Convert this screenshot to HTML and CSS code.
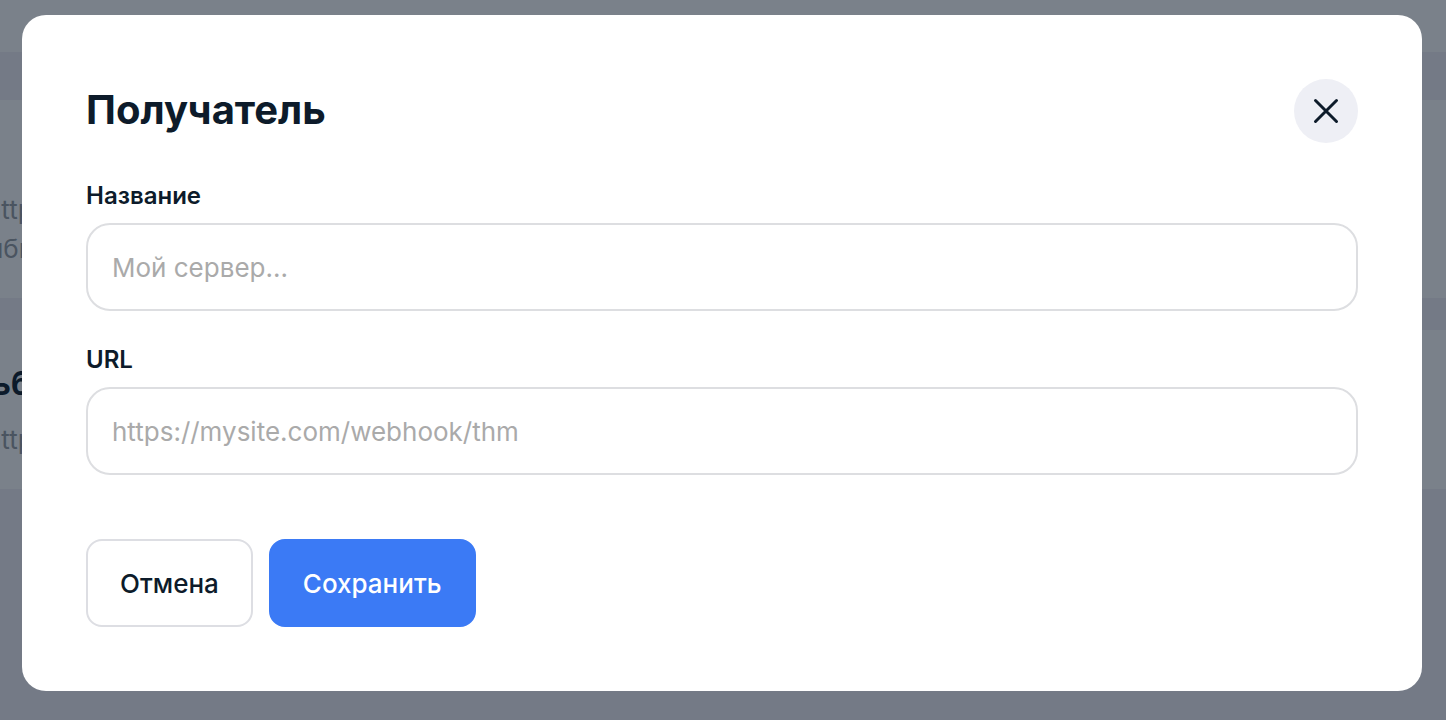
FILE: index.html
```html
<!DOCTYPE html>
<html lang="ru">
<head>
  <meta charset="UTF-8">
  <meta name="viewport" content="width=device-width, initial-scale=1.0">
  <title>Получатель</title>
  <link rel="stylesheet" href="styles.css">
</head>
<body>
  <div class="page" aria-hidden="true">
    <div class="topbar"></div>
    <div class="card card-first">
      <p>https://</p>
      <p class="status">ибка</p>
    </div>
    <div class="card">
      <h2>ьба</h2>
      <p>https://</p>
    </div>
  </div>

  <div class="overlay">
    <form class="modal" role="dialog" aria-labelledby="modalTitle">
      <div class="modal-header">
        <h1 id="modalTitle">Получатель</h1>
        <button type="button" class="close" aria-label="Закрыть">
          <svg width="28" height="28" viewBox="0 0 28 28" fill="none" stroke="currentColor" stroke-width="3" stroke-linecap="round">
            <path d="M3.5 3.5l21 21M24.5 3.5l-21 21"/>
          </svg>
        </button>
      </div>
      <div class="field">
        <label for="name">Название</label>
        <input type="text" id="name" placeholder="Мой сервер...">
      </div>
      <div class="field">
        <label for="url">URL</label>
        <input type="text" id="url" placeholder="https://mysite.com/webhook/thm">
      </div>
      <div class="actions">
        <button type="button" class="btn">Отмена</button>
        <button type="submit" class="btn btn-primary">Сохранить</button>
      </div>
    </form>
  </div>
</body>
</html>
```
FILE: styles.css
```css
* {
  box-sizing: border-box;
}
body {
  margin: 0;
  min-height: 100vh;
  overflow: hidden;
  font-family: Inter, sans-serif;
  color: #0d1b2a;
  background: #f1f0f7;
}
h1, h2, p {
  margin: 0;
}
.page {
  margin-left: -14px;
}
.topbar {
  height: 52px;
  margin-bottom: 48px;
  background: white;
}
.card {
  margin-bottom: 32px;
  padding: 34px 0 30px;
  background: white;
}
.card-first {
  padding: 90px 0 30px;
}
.card h2 {
  margin-bottom: 16px;
  padding-left: 6px;
  font-size: 32px;
  line-height: 40px;
}
.card p {
  font-size: 26px;
  line-height: 39px;
  color: #959ba3;
}
.card .status {
  padding-left: 2px;
}
.overlay {
  position: fixed;
  inset: 0;
  padding: 15px 24px 24px 22px;
  background: rgba(13, 25, 42, 0.55);
}
.modal {
  padding: 64px;
  border-radius: 24px;
  background: white;
}
.modal-header {
  display: flex;
  align-items: center;
  justify-content: space-between;
  margin-bottom: 37px;
}
.modal-header h1 {
  padding-bottom: 2px;
  font-size: 40px;
  line-height: 48px;
  font-weight: 700;
}
.close {
  display: flex;
  align-items: center;
  justify-content: center;
  width: 64px;
  height: 64px;
  padding: 0;
  border: none;
  border-radius: 50%;
  background: #eeeff5;
  color: #0d1b2a;
  cursor: pointer;
}
.field {
  margin-bottom: 33px;
}
.field label {
  display: block;
  margin-bottom: 11px;
  font-size: 24px;
  line-height: 32px;
  font-weight: 600;
}
.field input {
  display: block;
  width: 100%;
  height: 88px;
  padding: 0 24px;
  border: 2px solid #dddee1;
  border-radius: 24px;
  background: white;
  color: #0d1b2a;
  font-family: inherit;
  font-size: 26px;
}
.field input::placeholder {
  color: #aaa;
}
.actions {
  display: flex;
  gap: 16px;
  margin-top: 64px;
}
.btn {
  height: 88px;
  padding: 0 32px;
  border: 2px solid #dddee3;
  border-radius: 16px;
  background: white;
  color: #0d1b2a;
  font-family: inherit;
  font-size: 26px;
  font-weight: 500;
  cursor: pointer;
}
.btn-primary {
  border-color: #3b7af5;
  background: #3b7af5;
  color: white;
}
```
